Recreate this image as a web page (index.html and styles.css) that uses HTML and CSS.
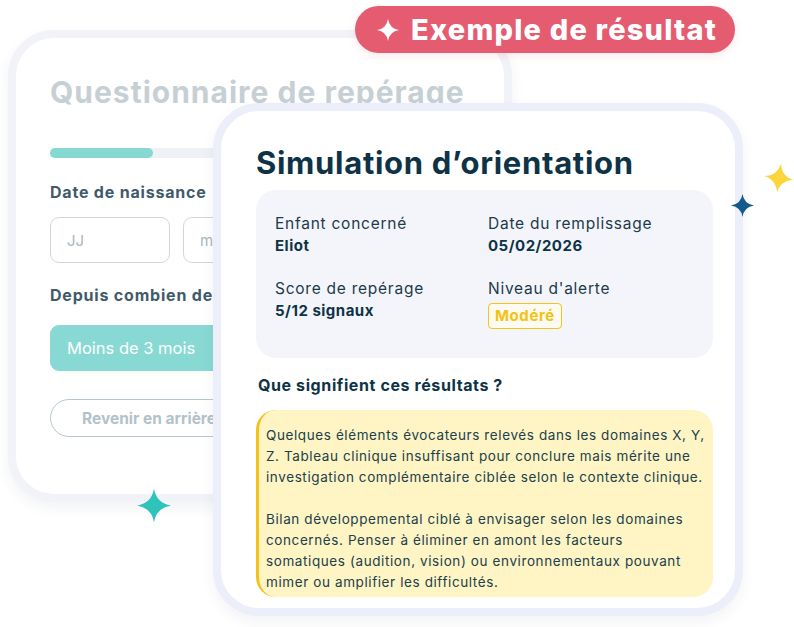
FILE: index.html
```html
<!DOCTYPE html>
<html lang="fr">
<head>
  <meta charset="UTF-8" />
  <meta name="viewport" content="width=device-width, initial-scale=1.0"/>
  <title>Exemple de résultat</title>
  <link rel="stylesheet" href="styles.css">
</head>
<body>
  <div class="stage">

    <!-- questionnaire en arrière-plan -->
    <section class="card card-back">
      <h2 class="back-title">Questionnaire de repérage</h2>
      <div class="progress"><span class="progress-fill"></span></div>

      <p class="field-label">Date de naissance</p>
      <div class="date-row">
        <div class="date-input">JJ</div>
        <div class="date-input">mm</div>
      </div>

      <p class="field-label field-label-next">Depuis combien de</p>
      <div class="choice-row">
        <div class="choice selected">Moins de 3 mois</div>
      </div>

      <div class="nav-row">
        <div class="btn-back">Revenir en arrière</div>
      </div>
    </section>

    <div class="badge">
      <svg class="badge-star" viewBox="0 0 24 24"><path d="M12 0 Q13.6 10.4 24 12 Q13.6 13.6 12 24 Q10.4 13.6 0 12 Q10.4 10.4 12 0Z"/></svg>
      <span>Exemple de résultat</span>
    </div>

    <!-- carte résultat -->
    <section class="card card-front">
      <h1 class="result-title">Simulation d’orientation</h1>

      <div class="summary">
        <div class="summary-item">
          <span class="summary-label">Enfant concerné</span>
          <span class="summary-value">Eliot</span>
        </div>
        <div class="summary-item">
          <span class="summary-label">Date du remplissage</span>
          <span class="summary-value">05/02/2026</span>
        </div>
        <div class="summary-item">
          <span class="summary-label">Score de repérage</span>
          <span class="summary-value">5/12 signaux</span>
        </div>
        <div class="summary-item">
          <span class="summary-label">Niveau d'alerte</span>
          <span class="level">Modéré</span>
        </div>
      </div>

      <h3 class="section-title">Que signifient ces résultats ?</h3>

      <div class="note">
        <p>Quelques éléments évocateurs relevés dans les domaines X, Y,<br>Z. Tableau clinique insuffisant pour conclure mais mérite une<br>investigation complémentaire ciblée selon le contexte clinique.</p>
        <p>Bilan développemental ciblé à envisager selon les domaines<br>concernés. Penser à éliminer en amont les facteurs<br>somatiques (audition, vision) ou environnementaux pouvant<br>mimer ou amplifier les difficultés.</p>
      </div>
    </section>

    <svg class="sparkle sparkle-teal" viewBox="0 0 24 24"><path d="M12 0 Q13.6 10.4 24 12 Q13.6 13.6 12 24 Q10.4 13.6 0 12 Q10.4 10.4 12 0Z"/></svg>
    <svg class="sparkle sparkle-yellow" viewBox="0 0 24 24"><path d="M12 0 Q13.6 10.4 24 12 Q13.6 13.6 12 24 Q10.4 13.6 0 12 Q10.4 10.4 12 0Z"/></svg>
    <svg class="sparkle sparkle-navy" viewBox="0 0 24 24"><path d="M12 0 Q13.6 10.4 24 12 Q13.6 13.6 12 24 Q10.4 13.6 0 12 Q10.4 10.4 12 0Z"/></svg>
  </div>
</body>
</html>
```

FILE: styles.css
```css
body {
  margin: 0;
  background: #ffffff;
  font-family: Inter, "Open Sans", Arial, sans-serif;
}

.stage {
  position: relative;
  width: 794px;
  height: 627px;
  overflow: hidden;
}

p, h1, h2, h3 {
  margin: 0;
}

.card {
  position: absolute;
  box-sizing: border-box;
  background: #ffffff;
  border: 8px solid #eceefa;
  border-radius: 46px;
  box-shadow: 0 6px 14px rgba(40, 50, 110, 0.06);
}

/* questionnaire */

.card-back {
  left: 8px;
  top: 30px;
  width: 504px;
  height: 472px;
  padding: 36px 0 0 34px;
  border-color: #f1f3f9;
  overflow: hidden;
}

.back-title {
  font-size: 30px;
  font-weight: 700;
  color: #c6d0d4;
  letter-spacing: 1px;
  white-space: nowrap;
  line-height: 36px;
}

.progress {
  margin-top: 38px;
  width: 420px;
  height: 10px;
  border-radius: 5px;
  background: #eef1f6;
}

.progress-fill {
  display: block;
  width: 103px;
  height: 100%;
  border-radius: 5px;
  background: #86d8d3;
}

.field-label {
  margin-top: 23px;
  font-size: 16px;
  font-weight: 700;
  color: #3f5b6b;
  line-height: 22px;
  letter-spacing: 0.8px;
  white-space: nowrap;
}

.field-label-next {
  margin-top: 21px;
}

.date-row {
  display: flex;
  gap: 13px;
  margin-top: 14px;
}

.date-input {
  box-sizing: border-box;
  width: 120px;
  height: 46px;
  padding-left: 16px;
  display: flex;
  align-items: center;
  border: 1.5px solid #cdd8dd;
  border-radius: 9px;
  font-size: 15px;
  color: #a9b7be;
}

.choice-row {
  display: flex;
  gap: 12px;
  margin-top: 19px;
}

.choice {
  box-sizing: border-box;
  width: 200px;
  height: 46px;
  padding-left: 16px;
  display: flex;
  align-items: center;
  border-radius: 9px;
  font-size: 16.5px;
  color: #3f5b6b;
  border: 1.5px solid #cdd8dd;
}

.choice.selected {
  background: #88d9d4;
  border-color: #88d9d4;
  color: #ffffff;
}

.nav-row {
  margin-top: 28px;
}

.btn-back {
  box-sizing: border-box;
  width: 200px;
  height: 38px;
  padding-left: 31px;
  display: flex;
  align-items: center;
  border: 1px solid #b8c7cf;
  border-radius: 19px;
  font-size: 15.5px;
  font-weight: 700;
  color: #b3c2ca;
  white-space: nowrap;
}

/* badge */

.badge {
  position: absolute;
  left: 355px;
  top: 6px;
  height: 47px;
  width: 380px;
  box-sizing: border-box;
  padding-left: 22px;
  display: flex;
  align-items: center;
  gap: 12px;
  background: #e55c71;
  border-radius: 24px;
  color: #ffffff;
  font-size: 29px;
  font-weight: 800;
  letter-spacing: 1.2px;
  white-space: nowrap;
  box-shadow: 0 3px 8px rgba(229, 92, 113, 0.15);
}

.badge-star {
  flex: none;
  width: 22px;
  height: 24px;
  fill: #ffffff;
}

/* résultat */

.card-front {
  left: 213px;
  top: 103px;
  width: 530px;
  height: 513px;
  padding: 34px 22px 0 35px;
}

.result-title {
  font-size: 31px;
  font-weight: 700;
  color: #0e3346;
  line-height: 36px;
  letter-spacing: 0.7px;
  white-space: nowrap;
}

.summary {
  box-sizing: border-box;
  height: 168px;
  margin-top: 9px;
  padding: 23px 0 0 19px;
  display: grid;
  grid-template-columns: 213px 1fr;
  row-gap: 21px;
  align-content: start;
  background: #f4f5fb;
  border-radius: 20px;
}

.summary-item {
  display: flex;
  flex-direction: column;
  align-items: flex-start;
}

.summary-label {
  font-size: 15.5px;
  color: #1d3a4a;
  line-height: 22px;
  letter-spacing: 0.75px;
}

.summary-value {
  font-size: 15px;
  font-weight: 700;
  color: #0e3346;
  line-height: 22px;
  letter-spacing: 0.5px;
}

.level {
  margin-top: 3px;
  padding: 0 6px;
  height: 24px;
  line-height: 24px;
  border: 1px solid #f4c51c;
  border-radius: 4px;
  background: #fdfaf0;
  color: #f2c313;
  font-size: 15px;
  font-weight: 700;
  letter-spacing: 0.6px;
}

.section-title {
  margin: 16px 0 0 2px;
  font-size: 16px;
  font-weight: 700;
  color: #0e3346;
  line-height: 22px;
  letter-spacing: 0.6px;
}

.note {
  box-sizing: border-box;
  height: 187px;
  margin-top: 14px;
  padding: 15px 4px 0 7px;
  background: #fef4c4;
  border-left: 3px solid #f2c21b;
  border-radius: 20px;
  font-size: 13.5px;
  line-height: 21px;
  color: #213f4c;
  letter-spacing: 0.6px;
  white-space: nowrap;
}

.note p + p {
  margin-top: 21px;
}

/* étoiles décoratives */

.sparkle {
  position: absolute;
}

.sparkle-teal {
  left: 137px;
  top: 487px;
  width: 34px;
  height: 37px;
  fill: #2ec3bb;
}

.sparkle-yellow {
  left: 764px;
  top: 163px;
  width: 30px;
  height: 30px;
  fill: #fbd53a;
  transform: rotate(8deg);
}

.sparkle-navy {
  left: 731px;
  top: 193px;
  width: 23px;
  height: 25px;
  fill: #145a8a;
}
```
